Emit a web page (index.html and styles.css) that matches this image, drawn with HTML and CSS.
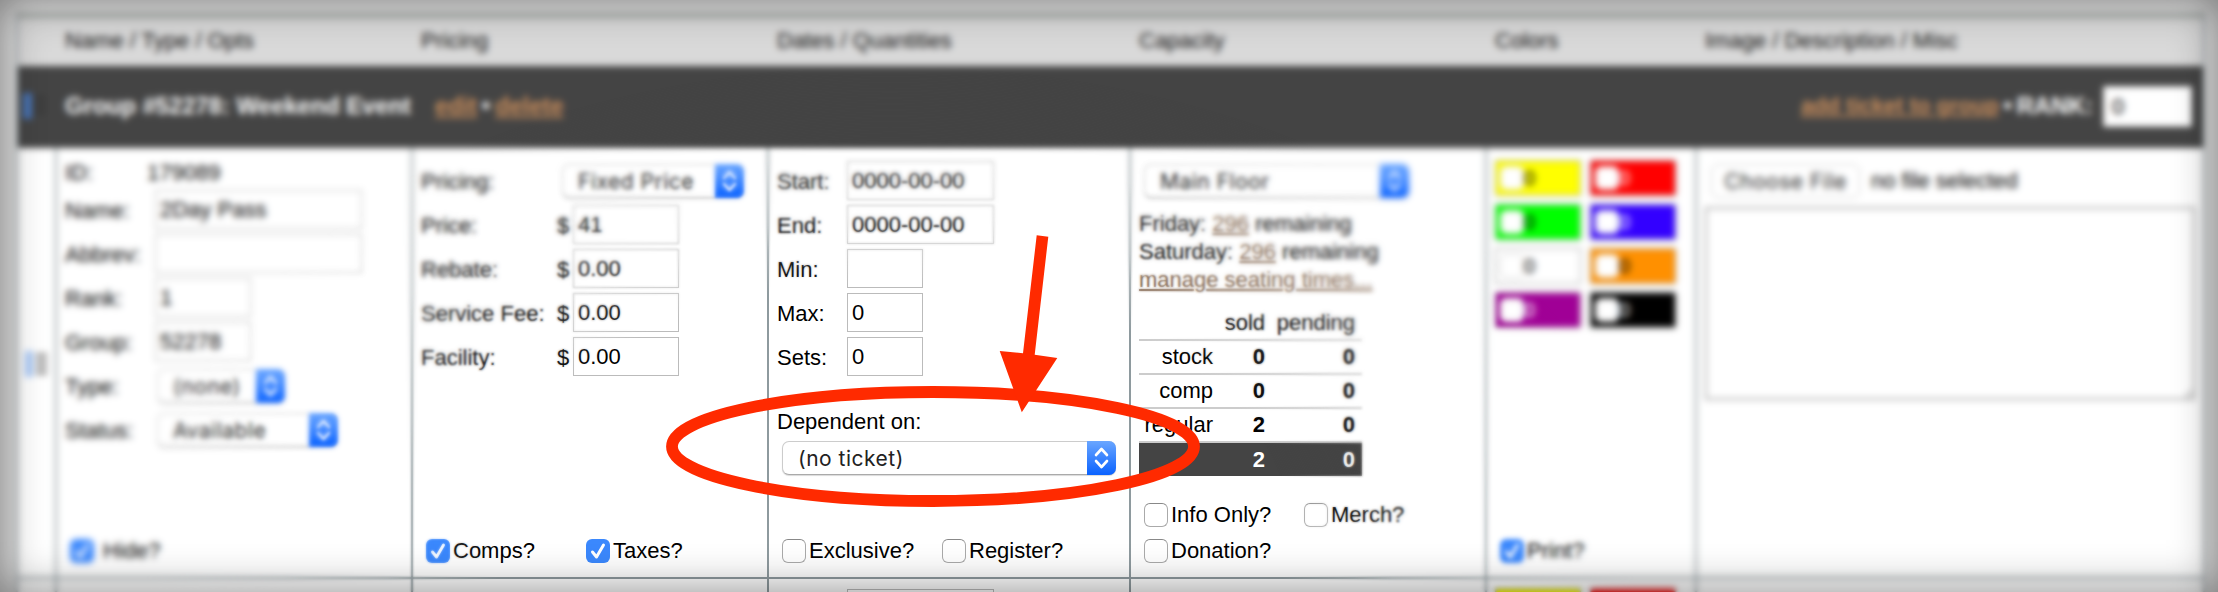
FILE: index.html
```html
<!DOCTYPE html>
<html lang="en">
<head>
  <meta charset="UTF-8" />
  <meta name="viewport" content="width=device-width, initial-scale=1.0" />
  <title>Tickets</title>
  <link rel="stylesheet" href="styles.css">
</head>
<body>
  <svg class="defs" width="0" height="0">
    <symbol id="arrows" viewBox="0 0 29 34">
      <path d="M9 14l5.500-6 5.500 6M9 20l5.500 6 5.500-6" fill="none" stroke="#fff" stroke-width="2.600" stroke-linecap="round" stroke-linejoin="round"/>
    </symbol>
    <symbol id="tick" viewBox="0 0 24 24">
      <path d="M6.500 13l4 5 7-12" fill="none" stroke="#fff" stroke-width="3" stroke-linecap="round" stroke-linejoin="round"/>
    </symbol>
    <symbol id="handle" viewBox="0 0 26 26">
      <rect x="2" y="0" width="8" height="26" fill="currentColor"/>
      <path d="M13 4h11M13 10h11M13 16h11M13 22h11" stroke="#777" stroke-width="3"/>
    </symbol>
    <symbol id="handle-dark" viewBox="0 0 26 26">
      <rect x="2" y="0" width="9" height="26" fill="currentColor"/>
      <path d="M13 5h11M13 12h11M13 19h11" stroke="#333" stroke-width="3"/>
    </symbol>
  </svg>

  <div class="tickets">
    <div class="row head">
      <div></div>
      <div>Name / Type / Opts</div>
      <div>Pricing</div>
      <div>Dates / Quantities</div>
      <div>Capacity</div>
      <div>Colors</div>
      <div>Image / Description / Misc</div>
    </div>

    <div class="group">
      <svg class="handle dark"><use href="#handle-dark"/></svg>
      <b class="title">Group #52278: Weekend Event</b>
      <a class="big">edit</a><b class="dot">•</b><a class="big">delete</a>
      <div class="right">
        <a>add ticket to group</a><b class="dot small">•</b><b>RANK:</b>
        <input class="rank" value="0">
      </div>
    </div>

    <div class="row ticket">
      <div class="cell grip"><svg class="handle"><use href="#handle"/></svg></div>

      <div class="cell">
        <div class="fields names">
          <div class="field id"><label>ID:</label><span>179089</span></div>
          <div class="field"><label>Name:</label><input class="long" value="2Day Pass"></div>
          <div class="field"><label>Abbrev:</label><input class="long"></div>
          <div class="field"><label>Rank:</label><input class="mid" value="1"></div>
          <div class="field"><label>Group:</label><input class="mid" value="52278"></div>
          <div class="field"><label>Type:</label><div class="select type"><span>(none)</span><svg><use href="#arrows"/></svg></div></div>
          <div class="field"><label>Status:</label><div class="select status"><span>Available</span><svg><use href="#arrows"/></svg></div></div>
        </div>
        <div class="checks"><label class="check wide"><i class="box on"><svg><use href="#tick"/></svg></i>Hide?</label></div>
      </div>

      <div class="cell">
        <div class="fields prices">
          <div class="field"><label>Pricing:</label><div class="select fixed"><span>Fixed Price</span><svg><use href="#arrows"/></svg></div></div>
          <div class="field"><label>Price:</label><em>$</em><input value="41"></div>
          <div class="field"><label>Rebate:</label><em>$</em><input value="0.00"></div>
          <div class="field"><label>Service Fee:</label><em>$</em><input value="0.00"></div>
          <div class="field"><label>Facility:</label><em>$</em><input value="0.00"></div>
        </div>
        <div class="checks">
          <label class="check"><i class="box on"><svg><use href="#tick"/></svg></i>Comps?</label>
          <label class="check"><i class="box on"><svg><use href="#tick"/></svg></i>Taxes?</label>
        </div>
      </div>

      <div class="cell">
        <div class="fields dates">
          <div class="field"><label>Start:</label><input class="date" value="0000-00-00"></div>
          <div class="field"><label>End:</label><input class="date" value="0000-00-00"></div>
          <div class="field"><label>Min:</label><input></div>
          <div class="field"><label>Max:</label><input value="0"></div>
          <div class="field"><label>Sets:</label><input value="0"></div>
        </div>
        <div class="dependent">
          <label>Dependent on:</label>
          <div class="select ticket-list"><span>(no ticket)</span><svg><use href="#arrows"/></svg></div>
        </div>
        <div class="checks">
          <label class="check"><i class="box"></i>Exclusive?</label>
          <label class="check"><i class="box"></i>Register?</label>
        </div>
      </div>

      <div class="cell">
        <div class="select floor"><span>Main Floor</span><svg><use href="#arrows"/></svg></div>
        <div class="times">
          Friday: <a>296</a> remaining<br>
          Saturday: <a>296</a> remaining<br>
          <a>manage seating times...</a>
        </div>
        <table class="counts">
          <tr><th></th><th>sold</th><th>pending</th></tr>
          <tr><td>stock</td><td>0</td><td>0</td></tr>
          <tr><td>comp</td><td>0</td><td>0</td></tr>
          <tr><td>regular</td><td>2</td><td>0</td></tr>
          <tr class="total"><td></td><td>2</td><td>0</td></tr>
        </table>
        <div class="checks">
          <label class="check"><i class="box"></i>Info Only?</label>
          <label class="check"><i class="box"></i>Merch?</label>
          <label class="check"><i class="box"></i>Donation?</label>
        </div>
      </div>

      <div class="cell">
        <div class="swatches">
          <div class="swatch yellow"><i class="box"></i>0</div>
          <div class="swatch red"><i class="box"></i>0</div>
          <div class="swatch green"><i class="box"></i>0</div>
          <div class="swatch blue"><i class="box"></i>0</div>
          <div class="swatch white"><i class="box"></i>0</div>
          <div class="swatch orange"><i class="box"></i>0</div>
          <div class="swatch purple"><i class="box"></i>0</div>
          <div class="swatch black"><i class="box"></i>0</div>
        </div>
        <div class="checks print"><label class="check"><i class="box on"><svg><use href="#tick"/></svg></i>Print?</label></div>
      </div>

      <div class="cell">
        <div class="file"><span class="choose">Choose File</span><b>no file selected</b></div>
        <textarea></textarea>
      </div>
    </div>

    <div class="row ticket next">
      <div class="cell"></div>
      <div class="cell"></div>
      <div class="cell"></div>
      <div class="cell"><div class="fields dates"><div class="field"><label></label><input class="date"></div></div></div>
      <div class="cell"></div>
      <div class="cell"><div class="swatches"><div class="swatch yellow"></div><div class="swatch red"></div></div></div>
      <div class="cell"></div>
    </div>
  </div>

  <!-- soft focus around the highlighted field -->
  <div class="focus focus-1"></div>
  <div class="focus focus-2"></div>
  <div class="focus focus-3"></div>
  <div class="vignette"></div>

  <svg class="marker" viewBox="0 0 2218 592">
    <ellipse cx="933" cy="446.500" rx="261" ry="54.500" fill="none" stroke="#ff2a00" stroke-width="11.800"/>
    <path d="M1036.700 235.300L1048.300 236.700L1034.700 354.700L1057.300 358L1021.800 412.300L999.700 351L1023 353.300Z" fill="#ff2a00"/>
  </svg>
</body>
</html>
```
FILE: styles.css
```css
* {
  box-sizing: border-box;
}

body {
  margin: 0;
  padding-top: 12px;
  height: 592px;
  overflow: hidden;
  position: relative;
  background: #e0e0e0;
  color: #000;
  font-family: "Liberation Sans", Arial, sans-serif;
  font-size: 22px;
  line-height: 28px;
}

.defs {
  position: absolute;
}

.tickets {
  margin: 0 13px 0 16px;
  border: 2px solid #a4aeb2;
  border-top: 7px solid #b9bdbb;
  border-bottom: 0;
  background: #fff;
}

.row {
  display: grid;
  grid-template-columns: 39px 356px 356px 362px 356px 210px 1fr;
}

.head {
  height: 47px;
  background: #d9d9d9;
  color: #111;
}

.head div {
  padding: 8px 0 0 8px;
}

.group {
  display: flex;
  align-items: center;
  height: 82px;
  padding: 0 11px 2px 3px;
  background: #444;
  color: #fff;
}

.group b {
  font-size: 23.7px;
}

.group .title {
  margin: 0 24px 0 18px;
}

a {
  color: #7d5f48;
  text-decoration: underline;
}

.group a {
  color: #cc8f5c;
  font-weight: bold;
}

.group .big {
  font-size: 23.7px;
}

.group .dot {
  width: 18px;
  text-align: center;
}

.right {
  display: flex;
  align-items: center;
  margin-left: auto;
}

.handle {
  width: 26px;
  height: 26px;
  color: #a9c8f5;
}

.handle.dark {
  color: #4a7fd0;
  opacity: .8;
}

.ticket {
  height: 431px;
}

.cell {
  display: flex;
  flex-direction: column;
  padding: 10px 8px 13px;
  border-right: 2px solid #8e9a9e;
  border-bottom: 2px solid #8e9a9e;
}

.cell:last-child {
  border-right: 0;
}

.next {
  height: 13px;
  overflow: hidden;
}

.next .cell {
  height: 60px;
  padding-top: 7px;
}

.grip {
  padding: 203px 0 0 5px;
}

input,
textarea {
  border: 1px solid #bbb;
  background: #fff;
  font: inherit;
  margin: 0;
  padding: 2px 4px 0;
  border-radius: 0;
}

input {
  height: 39px;
}

.group .rank {
  width: 89px;
  height: 41px;
  margin-left: 10px;
  padding-left: 8px;
}

.field {
  display: flex;
  align-items: center;
  height: 44px;
}

.field label,
.id span,
.field em {
  padding-top: 3px;
}

.field em {
  font-style: normal;
  width: 16px;
  flex: none;
}

.names {
  margin-top: -2px;
}

.names .id {
  height: 31px;
}

.names label {
  width: 90px;
}

.names .id label {
  width: 82px;
}

.names .long {
  width: 207px;
}

.names .mid {
  width: 96px;
}

.prices label {
  width: 136px;
}

.prices input {
  width: 106px;
}

.dates label {
  width: 70px;
}

.dates input {
  width: 76px;
}

.dates .date {
  width: 147px;
}

.select {
  display: flex;
  justify-content: space-between;
  align-items: center;
  height: 34px;
  border: 1px solid #ccc;
  border-bottom-color: #aaa;
  border-radius: 7px;
  background: #fff;
  box-shadow: 0 1px 1px rgba(0, 0, 0, .15);
  font-family: Inter, "Open Sans", sans-serif;
  font-size: 21px;
  letter-spacing: .5px;
  color: #222;
  padding-left: 15px;
}

.select span {
  padding-top: 2px;
}

.field .select {
  position: relative;
  top: 1px;
}

.select svg {
  width: 29px;
  height: 34px;
  margin-right: -1px;
  flex: none;
  border-radius: 0 7px 7px 0;
  background: linear-gradient(#6aa6ff, #0a62ff);
}

.select.type {
  width: 128px;
  margin-left: 2px;
}

.select.status {
  width: 181px;
  margin-left: 2px;
}

.select.fixed {
  width: 182px;
  margin-left: 5px;
}

.select.floor {
  width: 265px;
  min-height: 34px;
  margin: 6px 0 0 5px;
}

.select.ticket-list {
  width: 334px;
  margin: 5px 0 0 5px;
}

.dependent {
  margin-top: 30px;
}

.checks {
  display: flex;
  flex-wrap: wrap;
  row-gap: 8px;
  margin-top: auto;
  margin-bottom: -1px;
  padding-left: 5px;
}

.check {
  display: flex;
  align-items: center;
  width: 160px;
}

.check.wide .box {
  margin-right: 9px;
}

.box {
  width: 24px;
  height: 24px;
  flex: none;
  margin-right: 3px;
  border: 1.5px solid #aaa;
  border-top-color: #888;
  border-radius: 6px;
  background: #fff;
}

.box.on {
  border: 0;
  background: #3b88fd;
}

.box svg {
  display: block;
  width: 24px;
  height: 24px;
}

.print .check {
  width: auto;
}

.times {
  margin-top: 12px;
}

.counts {
  width: 223px;
  margin-top: 12px;
  border-collapse: collapse;
  text-align: right;
  table-layout: fixed;
}

.counts th,
.counts td {
  height: 34px;
  padding: 0 7px 0 0;
  border-bottom: 2px solid #ccc;
  font-weight: bold;
}

.counts th {
  font-weight: normal;
  width: 90px;
}

.counts th:first-child {
  width: 81px;
}

.counts th:nth-child(2) {
  width: 52px;
}

.counts td:first-child {
  font-weight: normal;
}

.counts .total td {
  background: #444;
  color: #fff;
  border: 0;
}

.swatches {
  display: grid;
  grid-template-columns: 86px 86px;
  column-gap: 9px;
  row-gap: 8px;
  padding-top: 2px;
}

.swatch {
  display: flex;
  align-items: center;
  height: 36px;
  padding-left: 4px;
  border: 1px solid #999;
  font-size: 20px;
}

.swatch .box {
  margin-right: 0;
  border-color: #ccc;
}

.yellow { background: #ff0; }
.red { background: #f00; color: #fff; }
.green { background: #0f0; }
.blue { background: #30f; color: #fff; }
.white { background: #fff; }
.orange { background: #ff9000; }
.purple { background: #a00096; color: #fff; }
.black { background: #000; color: #fff; }

.file {
  display: flex;
  align-items: center;
  padding: 6px 0 0 6px;
}

.file b {
  margin-left: 11px;
  font-size: 22px;
  font-weight: normal;
}

.choose {
  width: 149px;
  height: 34px;
  border: 1px solid #ccc;
  border-radius: 7px;
  text-align: center;
  font-family: Inter, sans-serif;
  font-size: 21px;
  letter-spacing: .5px;
  line-height: 34px;
  color: #222;
}

textarea {
  width: 490px;
  height: 193px;
  margin-top: 9px;
  border: 2px solid #aaa;
}

/* blur gets stronger away from the middle */
.focus {
  position: absolute;
  inset: 0;
}

.focus-1 {
  backdrop-filter: blur(1.3px);
  mask-image: radial-gradient(470px 290px at 890px 530px, transparent 85%, #000 108%);
}

.focus-2 {
  backdrop-filter: blur(2.2px);
  mask-image: radial-gradient(470px 290px at 890px 530px, transparent 100%, #000 130%);
}

.focus-3 {
  backdrop-filter: blur(2.8px);
  mask-image: radial-gradient(470px 290px at 890px 530px, transparent 125%, #000 160%);
}

.vignette {
  position: absolute;
  inset: 0;
  box-shadow: inset 0 0 44px rgba(0, 0, 0, .48);
}

.marker {
  position: absolute;
  left: 0;
  top: 0;
  width: 2218px;
  height: 592px;
}
```
